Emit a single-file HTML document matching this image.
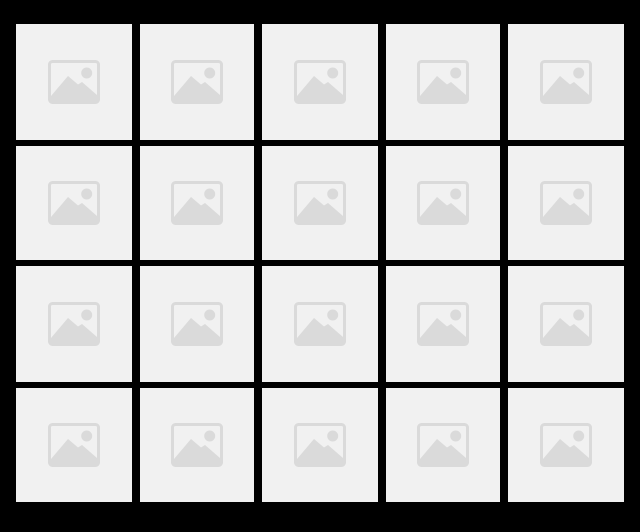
<!DOCTYPE html>
<html><head><style>
html,body{margin:0;padding:0;background:#000;width:640px;height:532px;overflow:hidden;position:relative}
.t{position:absolute;background:#f1f1f1;display:flex;align-items:center;justify-content:center}
</style></head><body>
<svg width="0" height="0" style="position:absolute"><defs>
<symbol id="ic" viewBox="0 0 52 44">
<rect x="1.5" y="1.5" width="49" height="41" rx="3" fill="none" stroke="#dadada" stroke-width="3"/>
<circle cx="38.7" cy="13" r="5.5" fill="#dadada"/>
<path d="M3 36 L20 16 L30 24.5 L34 22 L49 35 V42 H3 Z" fill="#dadada"/>
</symbol></defs></svg>
<div id="g"></div>
<script>
var xs=[[16,132],[140,254],[262,378],[386,500],[508,624]];
var ys=[[24,140],[146,260],[266,382],[388,502]];
var h='';
ys.forEach(function(y){xs.forEach(function(x){
h+='<div class="t" style="left:'+x[0]+'px;top:'+y[0]+'px;width:'+(x[1]-x[0])+'px;height:'+(y[1]-y[0])+'px"><svg width="52" height="44"><use href="#ic"/></svg></div>';
});});
document.getElementById('g').innerHTML=h;
</script>
</body></html>
